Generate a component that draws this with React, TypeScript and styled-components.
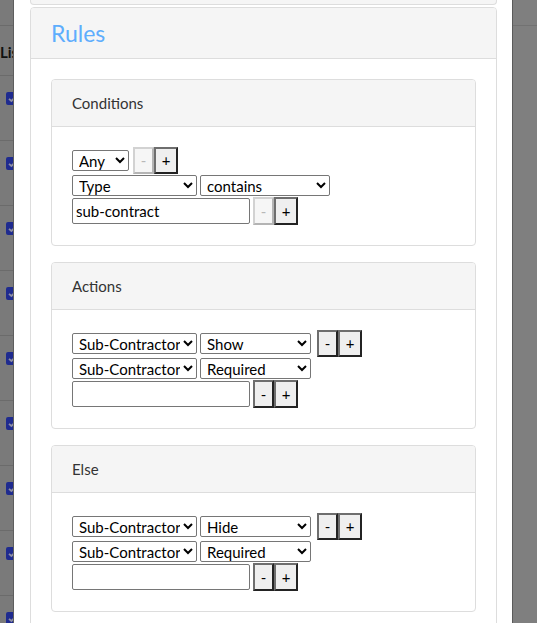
import React from "react";
import styled, { createGlobalStyle } from "styled-components";

const GlobalStyle = createGlobalStyle`
  html, body {
    margin: 0;
    padding: 0;
    height: 100%;
    overflow: hidden;
    background: #7f7f7f;
  }
  body {
    font-family: Lato, "Liberation Sans", sans-serif;
  }
  * { box-sizing: border-box; }
`;

const Page = styled.div`
  display: flex;
  width: 537px;
  height: 623px;
  overflow: hidden;
`;

const LeftStrip = styled.div`
  flex: none;
  width: 14px;
  background: #7a7a7a;
  border-right: 1px solid #5e5e5e;
  overflow: hidden;
  display: flex;
  flex-direction: column;
`;

const StripTop = styled.div`
  flex: none;
  height: 26px;
  border-bottom: 1px solid #6b6b6b;
`;

const StripHeader = styled.div`
  flex: none;
  height: 50px;
  border-bottom: 1px solid #6b6b6b;
  display: flex;
  align-items: center;
  padding: 2px 0 0 0;
  font-weight: 700;
  font-size: 15px;
  color: #111;
  white-space: nowrap;
  overflow: hidden;
`;

const StripRow = styled.div`
  flex: none;
  height: 65px;
  border-bottom: 1px solid #6b6b6b;
  padding: 16px 0 0 6px;
`;

const Check = styled.span`
  display: block;
  width: 13px;
  height: 13px;
  border-radius: 2px;
  background: #1f2b8f;
  svg { display: block; }
`;

const Modal = styled.div`
  flex: none;
  width: 498px;
  background: #fff;
  padding: 0 15px 0 16px;
  display: flex;
  flex-direction: column;
`;

const RightStrip = styled.div`
  flex: 1;
  background: #7f7f7f;
  border-left: 1px solid #5a5a5a;
`;

const RightTop = styled.div`
  height: 26px;
  border-bottom: 1px solid #727272;
`;

const PrevPanel = styled.div`
  flex: none;
  height: 5px;
  background: #f5f5f5;
  border: 1px solid #ddd;
  border-top: none;
  border-radius: 0 0 4px 4px;
  margin-bottom: 2px;
`;

const RulesPanel = styled.section`
  border: 1px solid #ddd;
  border-radius: 4px;
  flex: none;
`;

const RulesHeading = styled.h2`
  margin: 0;
  height: 51px;
  background: #f5f5f5;
  border-bottom: 1px solid #ddd;
  border-radius: 3px 3px 0 0;
  padding: 0 20px;
  display: flex;
  align-items: center;
  font-size: 23px;
  font-weight: 400;
  color: #5eadfd;
`;

const RulesBody = styled.div`
  padding: 20px;
  display: flex;
  flex-direction: column;
  gap: 16px;
`;

const SubPanel = styled.div`
  border: 1px solid #ddd;
  border-radius: 4px;
`;

const SubHeading = styled.h3`
  margin: 0;
  height: 47px;
  background: #f5f5f5;
  border-bottom: 1px solid #ddd;
  border-radius: 3px 3px 0 0;
  padding: 0 20px;
  display: flex;
  align-items: center;
  font-size: 15px;
  font-weight: 400;
  color: #333;
`;

const SubBody = styled.div`
  padding: 20px;
  display: flex;
  flex-direction: column;
`;

const Row = styled.div<{ $h: number }>`
  display: flex;
  align-items: center;
  height: ${(p) => p.$h}px;
`;

const Select = styled.select<{ $w: number; $gap?: number }>`
  width: ${(p) => p.$w}px;
  height: 21px;
  margin-right: ${(p) => p.$gap ?? 3}px;
  padding: 0 0 0 2px;
  font-family: Lato, "Liberation Sans", sans-serif;
  font-size: 15px;
  color: #000;
  background: #fff;
  border: 1px solid #767676;
  border-radius: 2px;
`;

const TextInput = styled.input`
  width: 178px;
  height: 26px;
  margin-right: 2px;
  padding: 0 3px;
  font-family: Lato, "Liberation Sans", sans-serif;
  font-size: 15px;
  color: #000;
  background: #fff;
  border: 1px solid #767676;
  border-radius: 2px;
`;

const Buttons = styled.div<{ $lead: number }>`
  display: flex;
  align-self: stretch;
  margin-left: ${(p) => p.$lead}px;
`;

const StepButton = styled.button<{ $w: number }>`
  width: ${(p) => p.$w}px;
  height: 100%;
  padding: 0;
  font-family: Lato, "Liberation Sans", sans-serif;
  font-size: 15px;
  line-height: 1;
  color: #000;
  background: #efefef;
  border: 2px solid;
  border-color: #6e6e6e #232323 #232323 #6e6e6e;
  &:disabled {
    color: #b8b8b8;
    background: #f6f6f6;
    border-color: #d2d2d2 #b4b4b4 #b4b4b4 #d2d2d2;
  }
`;

type Field =
  | { kind: "select"; w: number; value: string; options: string[]; gap?: number }
  | { kind: "input"; value: string };

type RowDef = {
  h: number;
  fields: Field[];
  buttons?: { lead: number; minusDisabled?: boolean };
};

type Section = { title: string; rows: RowDef[] };

const targets = ["Sub-Contractor", "Type", "Description"];

const sections: Section[] = [
  {
    title: "Conditions",
    rows: [
      {
        h: 27,
        fields: [{ kind: "select", w: 57, value: "Any", options: ["Any", "All"], gap: 0 }],
        buttons: { lead: 4, minusDisabled: true },
      },
      {
        h: 23,
        fields: [
          { kind: "select", w: 125, value: "Type", options: ["Type", "Sub-Contractor"] },
          { kind: "select", w: 130, value: "contains", options: ["contains", "equals", "is empty"] },
        ],
      },
      {
        h: 28,
        fields: [{ kind: "input", value: "sub-contract" }],
        buttons: { lead: 1, minusDisabled: true },
      },
    ],
  },
  {
    title: "Actions",
    rows: [
      {
        h: 27,
        fields: [
          { kind: "select", w: 125, value: "Sub-Contractor", options: targets },
          { kind: "select", w: 111, value: "Show", options: ["Show", "Hide"], gap: 0 },
        ],
        buttons: { lead: 6 },
      },
      {
        h: 23,
        fields: [
          { kind: "select", w: 125, value: "Sub-Contractor", options: targets },
          { kind: "select", w: 111, value: "Required", options: ["Required", "Optional"] },
        ],
      },
      { h: 28, fields: [{ kind: "input", value: "" }], buttons: { lead: 1 } },
    ],
  },
  {
    title: "Else",
    rows: [
      {
        h: 27,
        fields: [
          { kind: "select", w: 125, value: "Sub-Contractor", options: targets },
          { kind: "select", w: 111, value: "Hide", options: ["Show", "Hide"], gap: 0 },
        ],
        buttons: { lead: 6 },
      },
      {
        h: 23,
        fields: [
          { kind: "select", w: 125, value: "Sub-Contractor", options: targets },
          { kind: "select", w: 111, value: "Required", options: ["Required", "Optional"] },
        ],
      },
      { h: 28, fields: [{ kind: "input", value: "" }], buttons: { lead: 1 } },
    ],
  },
];

const CheckIcon = () => (
  <Check>
    <svg width="13" height="13" viewBox="0 0 13 13">
      <path d="M3 6.8 L5.4 9 L10 4.2" fill="none" stroke="#8d8fa3" strokeWidth="1.8" />
    </svg>
  </Check>
);

export default function App() {
  return (
    <>
      <GlobalStyle />
      <Page>
        <LeftStrip>
          <StripTop />
          <StripHeader>List</StripHeader>
          {Array.from({ length: 9 }).map((_, i) => (
            <StripRow key={i}>
              <CheckIcon />
            </StripRow>
          ))}
        </LeftStrip>
        <Modal>
          <PrevPanel />
          <RulesPanel>
            <RulesHeading>Rules</RulesHeading>
            <RulesBody>
              {sections.map((s) => (
                <SubPanel key={s.title}>
                  <SubHeading>{s.title}</SubHeading>
                  <SubBody>
                    {s.rows.map((r, ri) => (
                      <Row key={ri} $h={r.h}>
                        {r.fields.map((f, fi) =>
                          f.kind === "select" ? (
                            <Select key={fi} $w={f.w} $gap={f.gap} defaultValue={f.value}>
                              {f.options.map((o) => (
                                <option key={o}>{o}</option>
                              ))}
                            </Select>
                          ) : (
                            <TextInput key={fi} type="text" defaultValue={f.value} />
                          )
                        )}
                        {r.buttons && (
                          <Buttons $lead={r.buttons.lead}>
                            <StepButton $w={21} disabled={r.buttons.minusDisabled}>
                              -
                            </StepButton>
                            <StepButton $w={24}>+</StepButton>
                          </Buttons>
                        )}
                      </Row>
                    ))}
                  </SubBody>
                </SubPanel>
              ))}
            </RulesBody>
          </RulesPanel>
        </Modal>
        <RightStrip>
          <RightTop />
        </RightStrip>
      </Page>
    </>
  );
}
